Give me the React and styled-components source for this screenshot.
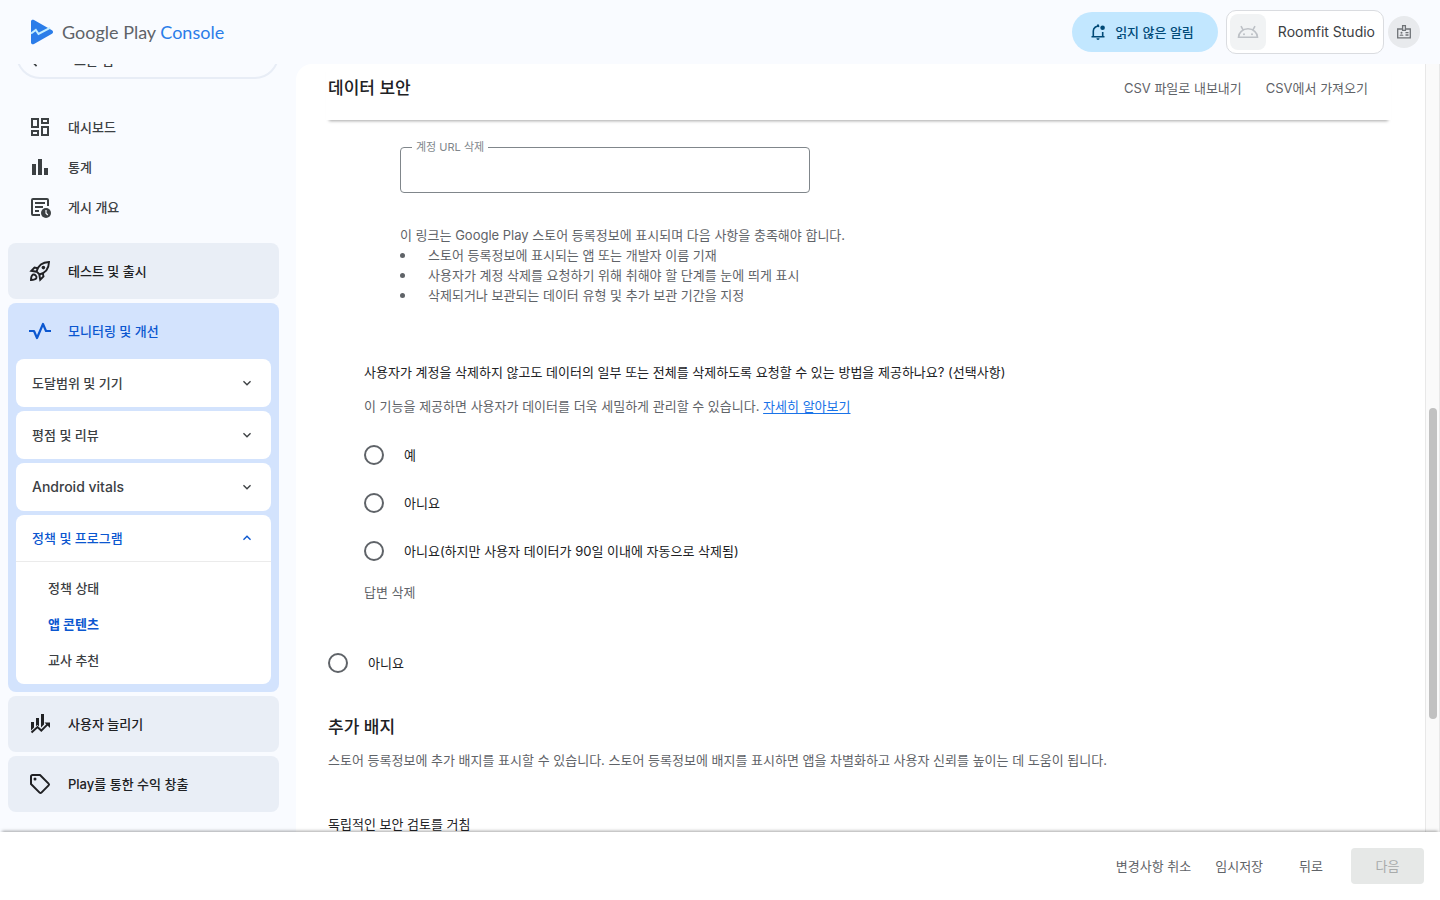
import React, { useState } from 'react';
import styled, { createGlobalStyle } from 'styled-components';
import { MdArrowBack, MdBarChart, MdOutlineDashboard, MdKeyboardArrowDown, MdKeyboardArrowUp } from 'react-icons/md';

const GlobalStyle = createGlobalStyle`
  * {
    box-sizing: border-box;
  }

  body {
    margin: 0;
    font-family: Inter, 'Noto Sans CJK KR', sans-serif;
    font-size: 13px;
    line-height: 20px;
    color: #202124;
    background-color: #f9fbff;
  }

  button {
    font: inherit;
    color: inherit;
    background: none;
    border: 0;
    padding: 0;
    cursor: pointer;
  }

  h1, h2, h3, p, ul, fieldset {
    margin: 0;
    padding: 0;
    border: 0;
  }

  ul {
    list-style: none;
  }
`;

const Page = styled.div`
  display: flex;
  flex-direction: column;
  height: 100vh;
`;

const TopBar = styled.header`
  display: flex;
  align-items: center;
  justify-content: space-between;
  flex-shrink: 0;
  height: 64px;
  padding: 0 20px 0 30px;
`;

const Brand = styled.a`
  display: flex;
  align-items: center;
  gap: 8px;
  font-family: Lato, sans-serif;
  font-size: 18px;
  line-height: 24px;
  color: #5f6368;
  text-decoration: none;

  span {
    color: #2b7de9;
  }
`;

const TopActions = styled.div`
  display: flex;
  align-items: center;
`;

const AlertButton = styled.button`
  display: flex;
  align-items: center;
  gap: 8px;
  height: 40px;
  padding: 0 24px 0 17px;
  margin-right: 8px;
  border-radius: 20px;
  font-weight: 500;
  color: #004a77;
  background-color: #c2e7ff;
`;

const AccountButton = styled.button`
  display: flex;
  align-items: center;
  gap: 12px;
  height: 44px;
  padding: 0 8px 0 3px;
  margin-right: 4px;
  border: 1px solid #dadce0;
  border-radius: 10px;
  font-size: 14px;
  color: #3c4043;
  background-color: #fff;
`;

const AppThumb = styled.span`
  display: flex;
  align-items: center;
  justify-content: center;
  width: 36px;
  height: 36px;
  border-radius: 8px;
  background-color: #f1f3f4;
`;

const BadgeButton = styled.button`
  display: flex;
  align-items: center;
  justify-content: center;
  width: 32px;
  height: 32px;
  border-radius: 50%;
  background-color: #e8eaed;
`;

const Body = styled.div`
  display: flex;
  flex: 1;
  min-height: 0;
`;

const Sidebar = styled.nav`
  display: flex;
  flex-direction: column;
  flex-shrink: 0;
  width: 296px;
  padding: 0 17px 0 8px;
  overflow: hidden;
`;

const AllApps = styled.button`
  display: flex;
  align-items: center;
  flex-shrink: 0;
  gap: 28px;
  height: 56px;
  margin: -41px 0 28px 8px;
  padding: 18px 8px 0;
  border: 2px solid #e8edf6;
  border-radius: 24px;
  font-weight: 500;
  color: #3c4043;
`;

const NavLink = styled.a`
  display: flex;
  align-items: center;
  flex-shrink: 0;
  gap: 16px;
  height: 40px;
  padding: 0 20px;
  font-weight: 500;
  color: #3c4043;
  text-decoration: none;
`;

const SectionList = styled.div`
  display: flex;
  flex-direction: column;
  flex-shrink: 0;
  gap: 4px;
  margin-top: 16px;
`;

const Section = styled.div`
  padding: ${({ $open }) => ($open ? '0 8px 8px' : '0 8px')};
  border-radius: 8px;
  background-color: ${({ $open }) => ($open ? '#d3e3fd' : '#e9eef6')};
`;

const SectionButton = styled.button`
  display: flex;
  align-items: center;
  gap: 16px;
  width: 100%;
  height: 56px;
  padding: 0 12px;
  font-weight: 500;
  color: ${({ $open }) => ($open ? '#0b57d0' : '#202124')};
`;

const GroupList = styled.div`
  display: flex;
  flex-direction: column;
  gap: 4px;
`;

const Group = styled.div`
  border-radius: 8px;
  background-color: #fff;
`;

const GroupButton = styled.button`
  display: flex;
  align-items: center;
  justify-content: space-between;
  width: 100%;
  height: ${({ $open }) => ($open ? '47px' : '48px')};
  padding: 0 16px;
  border-bottom: ${({ $open }) => ($open ? '1px solid #ebebeb' : '0')};
  font-size: ${({ $latin }) => ($latin ? '14px' : '13px')};
  font-weight: 500;
  color: ${({ $open }) => ($open ? '#0b57d0' : '#3c4043')};
`;

const SubList = styled.ul`
  padding: 8px 0 6px;
`;

const SubLink = styled.a`
  display: flex;
  align-items: center;
  height: 36px;
  padding-left: 32px;
  font-weight: ${({ $active }) => ($active ? 700 : 500)};
  color: ${({ $active }) => ($active ? '#0b57d0' : '#3c4043')};
  text-decoration: none;
`;

const Main = styled.main`
  flex: 1;
  min-width: 0;
  padding: 0 34px 0 30px;
  border-top-left-radius: 16px;
  overflow: hidden;
  background-color: #fff;
`;

const TitleBar = styled.div`
  display: flex;
  align-items: flex-start;
  justify-content: space-between;
  height: 56px;
  padding: 12px 23px 0 2px;
  box-shadow: 0 4px 3px -3px rgba(0, 0, 0, 0.35);
`;

const Heading = styled.h2`
  font-size: 17px;
  font-weight: 500;
  line-height: 24px;
`;

const ButtonRow = styled.div`
  display: flex;
  gap: 24px;
`;

const TextButton = styled.button`
  line-height: 24px;
  color: #5f6368;
`;

const Content = styled.div`
  padding: 19px 2px 0;
`;

const UrlBlock = styled.div`
  margin-left: 72px;
  color: #5f6368;
`;

const Field = styled.fieldset`
  width: 410px;
  height: 54px;
  padding: 0 11px;
  border: 1px solid #80868b;
  border-radius: 4px;

  legend {
    padding: 0 4px;
    font-size: 11px;
    line-height: 16px;
    color: #80868b;
  }

  input {
    width: 100%;
    border: 0;
    outline: 0;
    font: inherit;
  }
`;

const UrlNote = styled.div`
  padding-top: 32px;
`;

const Bullet = styled.li`
  display: flex;
  align-items: center;
  gap: 23px;

  &::before {
    content: '';
    width: 5px;
    height: 5px;
    border-radius: 50%;
    background-color: #5f6368;
  }
`;

const Question = styled.div`
  margin: 57px 0 0 36px;
`;

const Hint = styled.p`
  padding-top: 14px;
  color: #5f6368;

  a {
    color: #1a73e8;
    text-underline-offset: 2px;
  }
`;

const Options = styled.div`
  padding-top: 15px;
`;

const Option = styled.label`
  display: flex;
  align-items: center;
  gap: 20px;
  height: 48px;
  cursor: pointer;

  input {
    appearance: none;
    width: 20px;
    height: 20px;
    margin: 0;
    border: 2px solid #5f6368;
    border-radius: 50%;
  }

  input:checked {
    border-color: #1a73e8;
    box-shadow: inset 0 0 0 3px #fff, inset 0 0 0 10px #1a73e8;
  }
`;

const ClearButton = styled(TextButton)`
  display: block;
  margin: 5px 0 35px;
`;

const Badges = styled.section`
  padding-top: 28px;

  p {
    padding: 11px 0 44px;
    color: #5f6368;
  }

  h3 {
    font-size: 13px;
    font-weight: 400;
  }
`;

const ScrollTrack = styled.div`
  flex-shrink: 0;
  width: 15px;
  padding: 344px 2px 0;
  border: solid #e8e8e8;
  border-width: 0 1px;
  background-color: #fafafa;
`;

const ScrollThumb = styled.div`
  width: 8px;
  height: 311px;
  margin: 0 auto;
  border-radius: 4px;
  background-color: #c1c1c1;
`;

const Footer = styled.footer`
  position: relative;
  display: flex;
  align-items: center;
  justify-content: flex-end;
  flex-shrink: 0;
  gap: 24px;
  height: 68px;
  padding: 0 16px;
  background-color: #fff;
  box-shadow: 0 -3px 3px -2px rgba(0, 0, 0, 0.35);
`;

const BackButton = styled(TextButton)`
  padding: 0 4px 0 12px;
`;

const NextButton = styled.button`
  width: 73px;
  height: 36px;
  border-radius: 4px;
  color: #a8abab;
  background-color: #e6e8e7;
`;

function PlayLogo() {
  return (
    <svg width="24" height="26" viewBox="0 0 24 26" aria-hidden="true">
      <path d="M1 2.500C1 .8 2.700.2 4 1l18 10.300c1.400.8 1.400 2.600 0 3.400L4 25c-1.300.8-3 .2-3-1.500z" fill="#2b7de9" />
      <path d="M1 14.500l4.800-3.500 2.700 4L20 8.800" fill="none" stroke="#c4eeff" strokeWidth="2" />
    </svg>
  );
}

function BellIcon() {
  return (
    <svg width="18" height="18" viewBox="0 0 18 18" fill="none" stroke="#004a77" strokeWidth="1.600" aria-hidden="true">
      <path d="M2.500 13.700h13M4.300 13.500V8a4.700 4.700 0 0 1 6-4.500M13.700 9v4.500" />
      <path d="M9 1.500v2" strokeWidth="2" />
      <path d="M7.400 15.300h3.200a1.600 1.600 0 0 1-3.200 0z" fill="#004a77" stroke="none" />
      <circle cx="13.600" cy="4.800" r="2.300" fill="#004a77" stroke="none" />
    </svg>
  );
}

function AndroidHead() {
  return (
    <svg width="22" height="14" viewBox="0 0 22 14" fill="none" stroke="#bdc1c6" strokeWidth="1.600" aria-hidden="true">
      <path d="M1.500 12.300a9.500 8.500 0 0 1 19 0zM6.200 5.200L4 1.200M15.800 5.200L18 1.200" />
      <circle cx="7" cy="9.300" r="1" fill="#bdc1c6" stroke="none" />
      <circle cx="15" cy="9.300" r="1" fill="#bdc1c6" stroke="none" />
    </svg>
  );
}

function IdCard() {
  return (
    <svg width="16" height="16" viewBox="0 0 16 16" fill="none" stroke="#6f7377" strokeWidth="1.300" aria-hidden="true">
      <path d="M6 5H1.700v8.800h12.600V5H10M6.600 1.700h2.800v4.600H6.600zM9.500 8.700h3M9.500 11h3" />
      <circle cx="5.500" cy="8.800" r="1" fill="#6f7377" stroke="none" />
      <path d="M3.500 11.800c.3-1.800 3.700-1.800 4 0z" fill="#6f7377" stroke="none" />
    </svg>
  );
}

function PublishIcon() {
  return (
    <svg width="24" height="24" viewBox="0 0 24 24" fill="none" stroke="currentColor" strokeWidth="2" aria-hidden="true">
      <path d="M12 20H5a1 1 0 0 1-1-1V5a1 1 0 0 1 1-1h14a1 1 0 0 1 1 1v6M7 8h10M7 12h8M7 16h4" />
      <circle cx="18" cy="18" r="5" fill="currentColor" stroke="none" />
      <path d="M18 15v3.200l1.800 1.800" stroke="#f9fbff" strokeWidth="1.200" />
    </svg>
  );
}

function RocketIcon() {
  return (
    <svg width="24" height="24" viewBox="0 0 24 24" fill="none" stroke="currentColor" strokeWidth="1.900" aria-hidden="true">
      <path d="M8.500 12.500C10 7 14 3.200 21 3c-.2 7-4 11-9.500 12.500z" />
      <path d="M9.800 9.200L6.500 8.500 3.300 11.800l5.200.9M14.800 14.200l.7 3.300-3.300 3.200-.9-5.200" />
      <path d="M3 21c0-3 .5-4.500 1.700-5.300 2-1 4.600 1.600 3.600 3.600C7.500 20.500 6 21 3 21z" />
      <circle cx="15.400" cy="8.600" r="1.800" fill="currentColor" stroke="none" />
    </svg>
  );
}

function PulseIcon() {
  return (
    <svg width="24" height="24" viewBox="0 0 24 24" fill="none" stroke="currentColor" strokeWidth="2.200" strokeLinejoin="round" aria-hidden="true">
      <path d="M1 12h5L9 19l6-14 3 7h5" />
    </svg>
  );
}

function GrowthIcon() {
  return (
    <svg width="24" height="24" viewBox="0 0 24 24" fill="currentColor" aria-hidden="true">
      <path d="M3 10h3v5.500l-3 3zM8 6h3v8.500l-1.500-1.500L8 14.200zM13 2h3v10.500l-3 3z" />
      <path d="M3.500 20.500l6-5.500 3.800 3.600 6.500-6.500" fill="none" stroke="currentColor" strokeWidth="2" />
      <path d="M16.500 10.500H22V16z" />
    </svg>
  );
}

function TagIcon() {
  return (
    <svg width="24" height="24" viewBox="0 0 24 24" fill="none" stroke="currentColor" strokeWidth="2" strokeLinejoin="round" aria-hidden="true">
      <path d="M3 4.500A1.500 1.500 0 0 1 4.500 3H12l8.600 8.600a1.300 1.300 0 0 1 0 1.800l-7.200 7.200a1.300 1.300 0 0 1-1.800 0L3 12z" />
      <circle cx="7" cy="7" r="1.500" fill="currentColor" stroke="none" />
    </svg>
  );
}

const groups = [
  { name: '도달범위 및 기기' },
  { name: '평점 및 리뷰' },
  { name: 'Android vitals', latin: true },
];

const deletionOptions = ['예', '아니요', '아니요(하지만 사용자 데이터가 90일 이내에 자동으로 삭제됨)'];

function SideNav() {
  return (
    <Sidebar>
      <AllApps>
        <MdArrowBack size={20} />
        모든 앱
      </AllApps>
      <NavLink href="#dashboard"><MdOutlineDashboard size={24} />대시보드</NavLink>
      <NavLink href="#statistics"><MdBarChart size={24} />통계</NavLink>
      <NavLink href="#publishing"><PublishIcon />게시 개요</NavLink>
      <SectionList>
        <Section>
          <SectionButton><RocketIcon />테스트 및 출시</SectionButton>
        </Section>
        <Section $open>
          <SectionButton $open><PulseIcon />모니터링 및 개선</SectionButton>
          <GroupList>
            {groups.map(({ name, latin }) => (
              <Group key={name}>
                <GroupButton $latin={latin}>{name}<MdKeyboardArrowDown size={16} /></GroupButton>
              </Group>
            ))}
            <Group>
              <GroupButton $open>정책 및 프로그램<MdKeyboardArrowUp size={16} /></GroupButton>
              <SubList>
                <li><SubLink href="#policy">정책 상태</SubLink></li>
                <li><SubLink href="#content" $active>앱 콘텐츠</SubLink></li>
                <li><SubLink href="#teacher">교사 추천</SubLink></li>
              </SubList>
            </Group>
          </GroupList>
        </Section>
        <Section>
          <SectionButton><GrowthIcon />사용자 늘리기</SectionButton>
        </Section>
        <Section>
          <SectionButton><TagIcon />Play를 통한 수익 창출</SectionButton>
        </Section>
      </SectionList>
    </Sidebar>
  );
}

function App() {
  const [url, setUrl] = useState('');
  const [answer, setAnswer] = useState(null);

  return (
    <Page>
      <GlobalStyle />
      <TopBar>
        <Brand href="#home">
          <PlayLogo />
          <div>Google Play <span>Console</span></div>
        </Brand>
        <TopActions>
          <AlertButton><BellIcon />읽지 않은 알림</AlertButton>
          <AccountButton>
            <AppThumb><AndroidHead /></AppThumb>
            Roomfit Studio
          </AccountButton>
          <BadgeButton aria-label="계정"><IdCard /></BadgeButton>
        </TopActions>
      </TopBar>

      <Body>
        <SideNav />
        <Main>
          <TitleBar>
            <Heading>데이터 보안</Heading>
            <ButtonRow>
              <TextButton>CSV 파일로 내보내기</TextButton>
              <TextButton>CSV에서 가져오기</TextButton>
            </ButtonRow>
          </TitleBar>
          <Content>
            <UrlBlock>
              <Field>
                <legend><label htmlFor="delete-url">계정 URL 삭제</label></legend>
                <input id="delete-url" type="url" value={url} onChange={(e) => setUrl(e.target.value)} />
              </Field>
              <UrlNote>
                <p>이 링크는 Google Play 스토어 등록정보에 표시되며 다음 사항을 충족해야 합니다.</p>
                <ul>
                  <Bullet>스토어 등록정보에 표시되는 앱 또는 개발자 이름 기재</Bullet>
                  <Bullet>사용자가 계정 삭제를 요청하기 위해 취해야 할 단계를 눈에 띄게 표시</Bullet>
                  <Bullet>삭제되거나 보관되는 데이터 유형 및 추가 보관 기간을 지정</Bullet>
                </ul>
              </UrlNote>
            </UrlBlock>
            <Question>
              <p>사용자가 계정을 삭제하지 않고도 데이터의 일부 또는 전체를 삭제하도록 요청할 수 있는 방법을 제공하나요? (선택사항)</p>
              <Hint>이 기능을 제공하면 사용자가 데이터를 더욱 세밀하게 관리할 수 있습니다. <a href="#learn">자세히 알아보기</a></Hint>
              <Options>
                {deletionOptions.map((text, i) => (
                  <Option key={text}>
                    <input type="radio" name="deletion" checked={answer === i} onChange={() => setAnswer(i)} />
                    {text}
                  </Option>
                ))}
              </Options>
              <ClearButton onClick={() => setAnswer(null)}>답변 삭제</ClearButton>
            </Question>
            <Option>
              <input type="radio" name="account-deletion" />
              아니요
            </Option>
            <Badges>
              <Heading>추가 배지</Heading>
              <p>스토어 등록정보에 추가 배지를 표시할 수 있습니다. 스토어 등록정보에 배지를 표시하면 앱을 차별화하고 사용자 신뢰를 높이는 데 도움이 됩니다.</p>
              <h3>독립적인 보안 검토를 거침</h3>
            </Badges>
          </Content>
        </Main>
        <ScrollTrack>
          <ScrollThumb />
        </ScrollTrack>
      </Body>

      <Footer>
        <TextButton>변경사항 취소</TextButton>
        <TextButton>임시저장</TextButton>
        <BackButton>뒤로</BackButton>
        <NextButton disabled>다음</NextButton>
      </Footer>
    </Page>
  );
}

export default App;
